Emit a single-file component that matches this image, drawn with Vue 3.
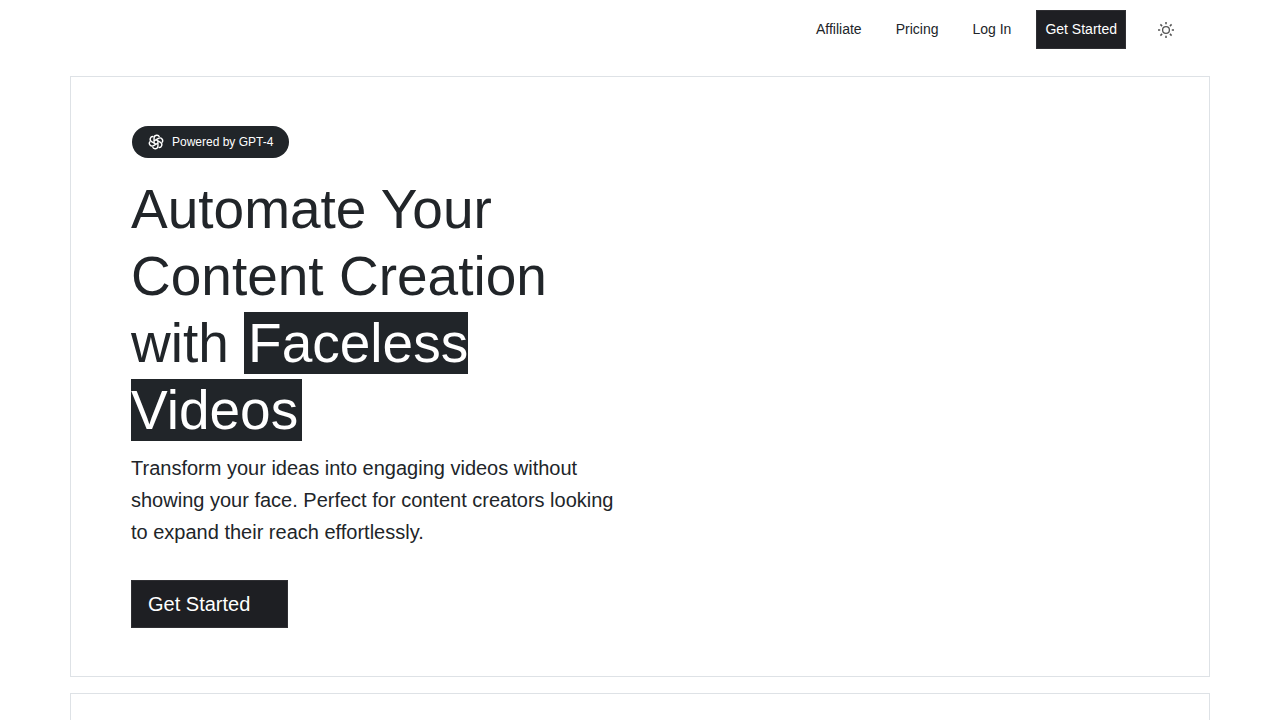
<script setup>
const links = [
  { label: 'Affiliate', href: '#affiliate' },
  { label: 'Pricing', href: '#pricing' },
  { label: 'Log In', href: '#login' },
]
const petals = [0, 60, 120, 180, 240, 300]
</script>

<template>
  <div class="page">
    <header class="container">
      <nav class="nav" aria-label="Main">
        <a v-for="link in links" :key="link.label" class="nav-link" :href="link.href">{{ link.label }}</a>
        <a class="button nav-cta" href="#start">Get Started</a>
        <button class="theme" type="button" aria-label="Toggle theme">
          <svg width="16" height="16" viewBox="0 0 16 16" fill="none" stroke="currentColor" aria-hidden="true">
            <circle cx="8" cy="8" r="3.4" stroke-width="1.3" />
            <path stroke-width="1.5" d="M8 0v2.2M8 13.8V16M0 8h2.2M13.8 8H16M2.4 2.4l1.7 1.7M11.9 11.9l1.7 1.7M13.6 2.4l-1.7 1.7M4.1 11.9l-1.7 1.7" />
          </svg>
        </button>
      </nav>
    </header>

    <main class="container sections">
      <section class="panel hero">
        <div class="copy">
          <div class="badge">
            <svg width="16" height="16" viewBox="-12 -12 24 24" fill="none" stroke="currentColor" stroke-width="2.1" aria-hidden="true">
              <path v-for="angle in petals" :key="angle" :transform="`rotate(${angle})`" d="M-2.9 1.7V-6a4.1 4.1 0 0 1 8-1.3" />
            </svg>
            <span>Powered by GPT-4</span>
          </div>
          <h1>Automate Your Content Creation with <mark>Faceless Videos</mark></h1>
          <p>Transform your ideas into engaging videos without showing your face. Perfect for content creators looking to expand their reach effortlessly.</p>
          <a class="button hero-cta" href="#start">Get Started</a>
        </div>
      </section>
      <section class="panel next"></section>
    </main>
  </div>
</template>

<style>
body {
  background: #fff;
}
</style>

<style scoped>
.page {
  height: 100vh;
  overflow: hidden;
  color: #212529;
  font-family: "Liberation Sans", Arial, sans-serif;
}

.page,
.page * {
  box-sizing: border-box;
}

.container {
  width: 100%;
  max-width: 1140px;
  margin: 0 auto;
}

.nav {
  display: flex;
  align-items: center;
  justify-content: flex-end;
  padding: 10px 32px 27px 0;
  font-size: 14px;
  line-height: 21px;
}

.nav-link {
  margin-right: 34px;
  color: inherit;
  text-decoration: none;
}

.button {
  display: inline-block;
  border: 1px solid #2f2f33;
  background: #1e1f23;
  color: #fff;
  text-decoration: none;
}

.nav-cta {
  margin-left: -9px;
  padding: 8px;
}

.theme {
  display: flex;
  margin-left: 28px;
  padding: 4px;
  border: 0;
  background: none;
  color: #545454;
}

.sections {
  display: flex;
  flex-direction: column;
  gap: 16px;
}

.panel {
  border: 1px solid #dee2e6;
}

.hero {
  padding: 48px 60px;
}

.copy {
  max-width: 490px;
}

.badge {
  display: inline-flex;
  align-items: center;
  gap: 8px;
  margin: 1px;
  padding: 7px 16px;
  border-radius: 16px;
  background: #212529;
  color: #fff;
  font-size: 12px;
  line-height: 18px;
  vertical-align: top;
}

h1 {
  margin: 17px 0 8px;
  font-size: 55px;
  font-weight: 400;
  line-height: 67px;
}

mark {
  padding: 0 4px;
  background: #212529;
  color: #fff;
}

p {
  margin: 0 0 32px;
  font-size: 20px;
  line-height: 32px;
}

.hero-cta {
  padding: 8px 37px 8px 16px;
  font-size: 20px;
  line-height: 30px;
  vertical-align: top;
}

.next {
  min-height: 400px;
}
</style>
